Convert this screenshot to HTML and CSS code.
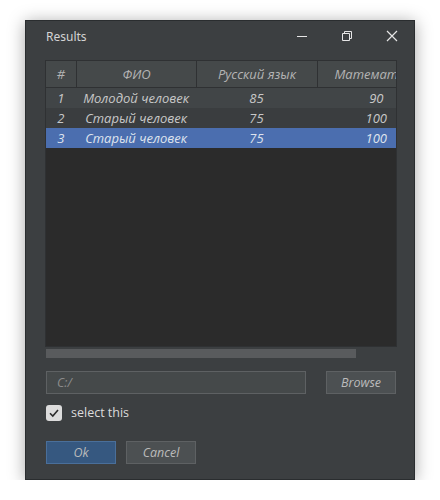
FILE: index.html
```html
<!DOCTYPE html>
<html>
<head>
<meta charset="utf-8">
<link rel="stylesheet" href="styles.css">
</head>
<body>
<div class="window">
  <div class="titlebar">
    <span class="title">Results</span>
    <div class="controls">
      <svg class="ctl ctl-min" width="12" height="12" viewBox="0 0 12 12"><path d="M1 6.5H11" stroke="#e6e6e6" stroke-width="1"/></svg>
      <svg class="ctl ctl-max" width="12" height="12" viewBox="0 0 12 12"><path d="M1.5 3.5H8.5V10.5H1.5Z M3.5 3.5V1.5H10.5V8.5H8.5" fill="none" stroke="#e6e6e6" stroke-width="1"/></svg>
      <svg class="ctl ctl-close" width="12" height="12" viewBox="0 0 12 12"><path d="M1 1L11 11M11 1L1 11" stroke="#e6e6e6" stroke-width="1.2"/></svg>
    </div>
  </div>
  <div class="content">
    <div class="table">
      <div class="viewport">
        <div class="row head">
          <div class="c c0">#</div>
          <div class="c c1">ФИО</div>
          <div class="c c2">Русский язык</div>
          <div class="c c3">Математика</div>
        </div>
        <div class="row r1">
          <div class="c c0">1</div>
          <div class="c c1">Молодой человек</div>
          <div class="c c2">85</div>
          <div class="c c3">90</div>
        </div>
        <div class="row r2">
          <div class="c c0">2</div>
          <div class="c c1">Старый человек</div>
          <div class="c c2">75</div>
          <div class="c c3">100</div>
        </div>
        <div class="row sel">
          <div class="c c0">3</div>
          <div class="c c1">Старый человек</div>
          <div class="c c2">75</div>
          <div class="c c3">100</div>
        </div>
      </div>
    </div>
    <div class="hscroll"><div class="thumb"></div></div>
    <div class="pathrow">
      <div class="field">C:/</div>
      <div class="btn">Browse</div>
    </div>
    <div class="checkrow">
      <span class="box"><svg width="16" height="16" viewBox="0 0 16 16"><path d="M4 8.2L6.8 11L12 5" fill="none" stroke="#2b2b2b" stroke-width="1.6"/></svg></span>
      <span class="label">select this</span>
    </div>
    <div class="actions">
      <div class="btn ok">Ok</div>
      <div class="btn">Cancel</div>
    </div>
  </div>
</div>
</body>
</html>
```
FILE: styles.css
```css
html, body {
  margin: 0;
  padding: 0;
  background: #ffffff;
}
body {
  font-family: "Open Sans", "Noto Sans", sans-serif;
  font-size: 12px;
  color: #bbbbbb;
}
.window {
  margin: 20px 0 0 25px;
  width: 390px;
  height: 460px;
  box-sizing: border-box;
  background: #3c3f41;
  border: 1px solid #2a2d2f;
  box-shadow: 0 2px 16px rgba(0, 0, 0, 0.35);
  display: flex;
  flex-direction: column;
}
.titlebar {
  height: 30px;
  display: flex;
  align-items: center;
  padding: 0 0 0 20px;
}
.title {
  font-family: "Noto Sans", "Open Sans", sans-serif;
  font-size: 12px;
  color: #d4d4d4;
  flex: 1;
}
.controls {
  display: flex;
  align-items: center;
}
.ctl { display: block; }
.ctl-min { margin-right: 33px; }
.ctl-max { margin-right: 33px; }
.ctl-close { margin-right: 16px; }
.content {
  padding: 9px 17px 0 19px;
  display: flex;
  flex-direction: column;
}
.table {
  height: 287px;
  box-sizing: border-box;
  border: 1px solid #2f3133;
  background: #2b2b2b;
  overflow: hidden;
}
.viewport {
  width: 390px;
}
.row {
  display: flex;
  height: 20px;
  align-items: center;
  font-style: italic;
  font-size: 13px;
}
.row.head {
  height: 26px;
  background: #45494a;
  border-bottom: 1px solid #2f3133;
  color: #b4b4b4;
}
.row.r1 { background: #414547; color: #c8c8c8; }
.row.r2 { background: #3a3d3f; color: #c8c8c8; }
.row.sel { background: #4b6eaf; color: #dfe4ee; }
.c {
  box-sizing: border-box;
  height: 100%;
  display: flex;
  align-items: center;
  justify-content: center;
  white-space: nowrap;
}
.c0 { width: 30px; }
.c1 { width: 121px; }
.c2 { width: 121px; }
.c3 { width: 120px; }
.head .c + .c { border-left: 1px solid #2f3133; }
.hscroll {
  margin: 2px 0 0 1px;
  height: 9px;
}
.thumb {
  width: 310px;
  height: 9px;
  background: #595b5d;
}
.pathrow {
  display: flex;
  margin: 13px 0 0 1px;
  gap: 20px;
}
.field {
  width: 260px;
  height: 23px;
  box-sizing: border-box;
  background: #45494a;
  border: 1px solid #5e6163;
  color: #8c8c8c;
  font-style: italic;
  font-size: 12.5px;
  padding-left: 10px;
  display: flex;
  align-items: center;
}
.btn {
  width: 70px;
  height: 23px;
  box-sizing: border-box;
  background: #4c5052;
  border: 1px solid #5e6163;
  color: #bbbbbb;
  font-style: italic;
  font-size: 12.5px;
  display: flex;
  align-items: center;
  justify-content: center;
}
.checkrow {
  display: flex;
  align-items: center;
  margin: 10px 0 0 1px;
  height: 17px;
}
.box {
  width: 16px;
  height: 16px;
  border-radius: 3px;
  background: #dcdcdc;
  display: block;
}
.box svg { display: block; }
.label {
  margin-left: 9px;
  font-size: 12.5px;
  color: #dcdcdc;
}
.actions {
  display: flex;
  gap: 10px;
  margin: 20px 0 0 1px;
}
.btn.ok {
  background: #365880;
  border-color: #4a6f9a;
}
```
